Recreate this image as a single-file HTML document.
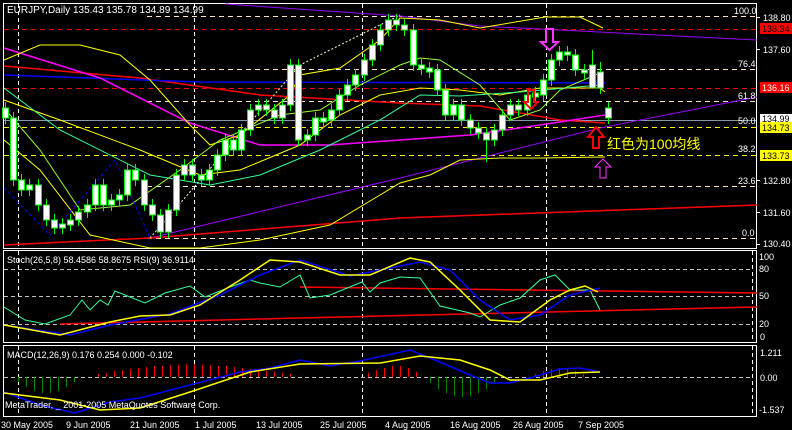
<!DOCTYPE html>
<html><head><meta charset="utf-8"><style>
html,body{margin:0;padding:0;background:#000;width:792px;height:430px;overflow:hidden}
text{font-family:"Liberation Sans","Noto Sans CJK SC",sans-serif;font-size:9px;fill:#fff}
</style></head><body>
<svg width="792" height="430" xmlns="http://www.w3.org/2000/svg">
<rect width="792" height="430" fill="#000"/>
<g fill="none" stroke="#fff" stroke-width="1">
<rect x="3.5" y="3.5" width="753" height="245"/>
<rect x="3.5" y="250.5" width="753" height="92"/>
<rect x="3.5" y="345.5" width="753" height="71"/>
</g>
<g stroke="#fff" stroke-dasharray="4,3" stroke-width="1">
<line x1="18.5" y1="4" x2="18.5" y2="248"/><line x1="194.5" y1="4" x2="194.5" y2="248"/><line x1="362.5" y1="4" x2="362.5" y2="248"/><line x1="546.5" y1="4" x2="546.5" y2="248"/>
<line x1="18.5" y1="251" x2="18.5" y2="342"/><line x1="194.5" y1="251" x2="194.5" y2="342"/><line x1="362.5" y1="251" x2="362.5" y2="342"/><line x1="546.5" y1="251" x2="546.5" y2="342"/>
<line x1="18.5" y1="346" x2="18.5" y2="416"/><line x1="194.5" y1="346" x2="194.5" y2="416"/><line x1="362.5" y1="346" x2="362.5" y2="416"/><line x1="546.5" y1="346" x2="546.5" y2="416"/>
<line x1="752.5" y1="251" x2="752.5" y2="342"/><line x1="752.5" y1="346" x2="752.5" y2="416"/>
</g>
<g stroke="#ffe4c4" stroke-dasharray="5,4">
<line x1="147" y1="16.5" x2="756" y2="16.5"/><line x1="147" y1="69.5" x2="756" y2="69.5"/><line x1="147" y1="101.5" x2="756" y2="101.5"/><line x1="147" y1="186.5" x2="756" y2="186.5"/><line x1="147" y1="238.5" x2="756" y2="238.5"/>
</g>
<g stroke="#ff0000" stroke-dasharray="5,4"><line x1="4" y1="29.5" x2="756" y2="29.5"/><line x1="4" y1="88.5" x2="756" y2="88.5"/></g>
<g stroke="#ffff00" stroke-dasharray="5,4"><line x1="4" y1="127.5" x2="756" y2="127.5"/><line x1="4" y1="155.5" x2="756" y2="155.5"/></g>
<line x1="4" y1="120.5" x2="756" y2="120.5" stroke="#8899aa"/>
<g fill="none" stroke-width="1">
<polyline stroke="#9900ff" points="225,4 400,16 480,26 757,40"/>
<polyline stroke="#9900ff" points="150,238 400,178 600,128 757,97"/>
<polyline stroke="#ff0000" stroke-width="1.5" points="4,245 150,238 400,218 757,205"/>
<polyline stroke="#ff0000" stroke-width="1.5" points="4,66 140,78 260,95 400,103 480,106 560,120 605,123"/>
<polyline stroke="#0000ff" stroke-width="1.5" points="4,75 200,82 605,83"/>
<polyline stroke="#ff00ff" stroke-width="1.5" points="4,48 100,78 190,123 260,145 330,145 400,140 470,135 540,125 605,115"/>
<polyline stroke="#ffff00" points="4,60 40,45 80,45 120,55 150,80 190,125 210,145 240,135 290,95 300,75 340,68 380,40 400,18 440,20 480,28 545,17 580,17 603,28"/>
<polyline stroke="#ffff00" points="4,140 40,170 90,235 150,248 200,248 260,240 330,225 380,195 400,183 430,175 460,160 500,158 540,158 605,157"/>
<polyline stroke="#ffff00" points="4,100 60,120 140,150 200,175 240,170 300,145 340,115 380,95 420,88 460,90 500,95 540,88 600,88 605,92"/>
<polyline stroke="#33ff99" points="4,88 60,130 150,175 210,185 260,175 320,150 380,120 420,95 460,96 520,92 600,85"/>
<polyline stroke="#99ff33" points="4,108 40,150 80,210 130,205 180,170 220,140 280,115 320,110 360,85 400,65 420,58 440,60 480,85 510,120 540,110 560,90 600,73"/>
<polyline stroke="#0000ff" stroke-dasharray="3,3" points="4,188 50,235 115,160 150,238"/>
<polyline stroke="#ffffcc" stroke-dasharray="2,2" points="150,238 300,65 400,15"/>
</g>
<path fill="none" stroke="#00ff00" d="M5.5 102V124M13.5 112V186M21.5 174V196M29.5 179V196M38.5 179V211M46.5 199V226M54.5 214V234M62.5 218V234M70.5 214V231M78.5 206V226M87.5 199V218M95.5 179V211M103.5 179V211M111.5 194V211M119.5 189V206M127.5 164V201M135.5 164V186M144.5 174V211M152.5 199V221M160.5 209V238M168.5 204V238M176.5 169V216M184.5 159V181M192.5 159V181M201.5 169V186M209.5 164V186M217.5 149V176M225.5 134V161M233.5 134V156M241.5 124V156M250.5 104V136M258.5 99V116M266.5 99V116M274.5 104V124M282.5 99V124M290.5 59V111M298.5 59V146M307.5 129V146M315.5 112V141M323.5 112V128M331.5 104V126M339.5 89V116M347.5 79V101M355.5 69V91M364.5 54V81M372.5 39V66M380.5 24V51M388.5 14V36M396.5 14V31M404.5 19V36M413.5 24V71M421.5 59V75M429.5 62V78M437.5 64V96M445.5 84V121M453.5 99V121M461.5 99V126M470.5 114V134M478.5 122V139M486.5 127V162M494.5 124V146M502.5 109V136M510.5 99V121M518.5 99V116M527.5 89V116M535.5 87V103M543.5 74V101M551.5 54V86M559.5 46V66M567.5 46V61M575.5 49V76M584.5 64V79M592.5 50V78M600.5 62V94M608.5 102V124"/>
<g fill="#fff" stroke="#00ff00">
<rect x="2.5" y="108" width="6" height="10"/><rect x="10.5" y="118" width="6" height="62"/><rect x="18.5" y="180" width="6" height="10"/><rect x="26.5" y="185" width="6" height="5"/><rect x="35.5" y="185" width="6" height="20"/><rect x="43.5" y="205" width="6" height="15"/><rect x="51.5" y="220" width="6" height="8"/><rect x="59.5" y="224" width="6" height="4"/><rect x="67.5" y="220" width="6" height="5"/><rect x="75.5" y="212" width="6" height="8"/><rect x="84.5" y="205" width="6" height="7"/><rect x="92.5" y="185" width="6" height="20"/><rect x="100.5" y="185" width="6" height="20"/><rect x="108.5" y="200" width="6" height="5"/><rect x="116.5" y="195" width="6" height="5"/><rect x="124.5" y="170" width="6" height="25"/><rect x="132.5" y="170" width="6" height="10"/><rect x="141.5" y="180" width="6" height="25"/><rect x="149.5" y="205" width="6" height="10"/><rect x="157.5" y="215" width="6" height="17"/><rect x="165.5" y="210" width="6" height="22"/><rect x="173.5" y="175" width="6" height="35"/><rect x="181.5" y="165" width="6" height="10"/><rect x="189.5" y="165" width="6" height="10"/><rect x="198.5" y="175" width="6" height="5"/><rect x="206.5" y="170" width="6" height="10"/><rect x="214.5" y="155" width="6" height="15"/><rect x="222.5" y="140" width="6" height="15"/><rect x="230.5" y="140" width="6" height="10"/><rect x="238.5" y="130" width="6" height="20"/><rect x="247.5" y="110" width="6" height="20"/><rect x="255.5" y="105" width="6" height="5"/><rect x="263.5" y="105" width="6" height="5"/><rect x="271.5" y="110" width="6" height="8"/><rect x="279.5" y="105" width="6" height="13"/><rect x="287.5" y="65" width="6" height="40"/><rect x="295.5" y="65" width="6" height="75"/><rect x="304.5" y="135" width="6" height="5"/><rect x="312.5" y="118" width="6" height="17"/><rect x="320.5" y="118" width="6" height="4"/><rect x="328.5" y="110" width="6" height="10"/><rect x="336.5" y="95" width="6" height="15"/><rect x="344.5" y="85" width="6" height="10"/><rect x="352.5" y="75" width="6" height="10"/><rect x="361.5" y="60" width="6" height="15"/><rect x="369.5" y="45" width="6" height="15"/><rect x="377.5" y="30" width="6" height="15"/><rect x="385.5" y="20" width="6" height="10"/><rect x="393.5" y="20" width="6" height="5"/><rect x="401.5" y="25" width="6" height="5"/><rect x="410.5" y="30" width="6" height="35"/><rect x="418.5" y="65" width="6" height="4"/><rect x="426.5" y="68" width="6" height="4"/><rect x="434.5" y="70" width="6" height="20"/><rect x="442.5" y="90" width="6" height="25"/><rect x="450.5" y="105" width="6" height="10"/><rect x="458.5" y="105" width="6" height="15"/><rect x="467.5" y="120" width="6" height="8"/><rect x="475.5" y="128" width="6" height="5"/><rect x="483.5" y="133" width="6" height="7"/><rect x="491.5" y="130" width="6" height="10"/><rect x="499.5" y="115" width="6" height="15"/><rect x="507.5" y="105" width="6" height="10"/><rect x="515.5" y="105" width="6" height="5"/><rect x="524.5" y="95" width="6" height="15"/><rect x="532.5" y="93" width="6" height="4"/><rect x="540.5" y="80" width="6" height="15"/><rect x="548.5" y="60" width="6" height="20"/><rect x="556.5" y="52" width="6" height="8"/><rect x="564.5" y="52" width="6" height="3"/><rect x="572.5" y="55" width="6" height="15"/><rect x="581.5" y="70" width="6" height="3"/><rect x="589.5" y="65" width="6" height="23"/><rect x="597.5" y="72" width="6" height="16"/><rect x="605.5" y="108" width="6" height="10"/>
</g>
<g stroke="#c0c0c0" stroke-dasharray="4,3"><line x1="4" y1="269.5" x2="752" y2="269.5"/><line x1="4" y1="296.5" x2="752" y2="296.5"/><line x1="4" y1="324.5" x2="752" y2="324.5"/><line x1="4" y1="377.5" x2="752" y2="377.5"/></g>
<path fill="none" stroke="#008800" d="M18.5 377v5M26.5 377v10M34.5 377v14M42.5 377v16M50.5 377v16M58.5 377v14M66.5 377v10M74.5 377v5M430.5 377v6M438.5 377v12M446.5 377v16M454.5 377v19M462.5 377v20M470.5 377v19M478.5 377v16M486.5 377v12M494.5 377v6"/>
<path fill="none" stroke="#ff0000" d="M98.5 377v-3M106.5 377v-4M114.5 377v-6M122.5 377v-7M130.5 377v-8M138.5 377v-9M146.5 377v-10M154.5 377v-11M162.5 377v-11M170.5 377v-12M178.5 377v-12M186.5 377v-13M194.5 377v-13M202.5 377v-12M210.5 377v-12M218.5 377v-11M226.5 377v-11M234.5 377v-10M242.5 377v-9M250.5 377v-8M258.5 377v-7M266.5 377v-6M274.5 377v-5M282.5 377v-4M290.5 377v-3M368.5 377v-4M376.5 377v-7M384.5 377v-9M392.5 377v-11M400.5 377v-11M408.5 377v-9M416.5 377v-5M535.5 377v-3M543.5 377v-6M551.5 377v-8M559.5 377v-9M567.5 377v-8M575.5 377v-6M583.5 377v-3"/>
<g fill="none">
<polyline stroke="#ff0000" stroke-width="1.5" points="60,324 300,318 757,307"/>
<polyline stroke="#ff0000" stroke-width="1.5" points="300,287 757,293"/>
<polyline stroke="#33ff99" points="4,307 25,320 45,324 70,315 82,300 90,310 100,300 108,305 115,291 130,297 145,303 165,293 190,286 205,297 230,287 250,280 260,283 280,287 300,275 310,298 330,295 362,282 370,292 380,283 400,277 420,278 430,292 440,306 470,313 480,317 500,305 520,298 540,280 555,275 570,290 590,290 600,310"/>
<polyline stroke="#0000ff" stroke-width="1.5" points="4,325 70,335 110,325 170,314 220,295 260,275 300,260 350,276 380,270 420,262 450,270 480,300 510,320 540,315 570,295 600,288"/>
<polyline stroke="#ffff00" stroke-width="1.5" points="4,325 60,335 110,322 140,316 170,315 200,305 240,280 270,260 300,262 340,275 370,275 410,258 430,262 460,290 490,320 520,322 550,300 570,290 585,286 598,292"/>
<polyline stroke="#0000ff" stroke-width="1.5" points="4,392 40,405 75,413 110,402 140,398 190,385 240,372 270,368 300,360 330,366 360,361 410,350 440,362 470,375 490,383 510,383 530,378 560,369 580,368 600,372"/>
<polyline stroke="#ffff00" stroke-width="1.5" points="4,393 60,400 100,410 140,408 190,392 250,372 300,364 380,363 420,356 460,360 490,370 510,380 540,380 570,373 600,372"/>
</g>
<path d="M546 29h7v13h5l-8.5 8-8.5-8h5z" fill="none" stroke="#ff33ff" stroke-width="2"/>
<path d="M528 90h6v12h4l-7 7-7-7h4z" fill="none" stroke="#ff0000" stroke-width="2"/>
<path d="M593 148v-11h-5l8-10 8 10h-5v11z" fill="none" stroke="#ff0000" stroke-width="2"/>
<path d="M600 178v-11h-5l8-8 8 8h-5v11z" fill="none" stroke="#ff33ff" stroke-width="1"/>
<text x="607" y="149" style="font-size:14px;fill:#ffff00">红色为100均线</text>
<text x="7" y="13" style="font-size:10px">EURJPY,Daily  135.43 135.78 134.89 134.99</text>
<text x="7" y="263">Stoch(26,5,8) 58.4586 58.8675 RSI(9) 36.9114</text>
<text x="7" y="358">MACD(12,26,9) 0.176 0.254 0.000 -0.102</text>
<text x="5" y="408">MetaTrader, _ 2001-2005 MetaQuotes Software Corp.</text>
<g><text x="734" y="14">100.0</text><text x="738" y="67">76.4</text><text x="738" y="99">61.8</text><text x="738" y="124">50.0</text><text x="738" y="152">38.2</text><text x="738" y="184">23.6</text><text x="742" y="236">0.0</text></g>
<g stroke="#fff"><line x1="757" y1="17.5" x2="760" y2="17.5"/><line x1="757" y1="49.5" x2="760" y2="49.5"/><line x1="757" y1="180.5" x2="760" y2="180.5"/><line x1="757" y1="212.5" x2="760" y2="212.5"/><line x1="757" y1="244.5" x2="760" y2="244.5"/></g>
<text x="763" y="21">138.80</text><text x="763" y="53">137.60</text><text x="763" y="184">132.80</text><text x="763" y="216">131.60</text><text x="763" y="247">130.40</text>
<rect x="760" y="23" width="32" height="11" fill="#ff0000"/><text x="762" y="32" style="fill:#000">138.34</text>
<rect x="760" y="82" width="32" height="11" fill="#ff0000"/><text x="762" y="91">136.16</text>
<rect x="760" y="114" width="32" height="10" fill="#fff"/><text x="762" y="122" style="fill:#000">134.99</text>
<rect x="760" y="122" width="32" height="11" fill="#ffff00"/><text x="762" y="131" style="fill:#000">134.73</text>
<rect x="760" y="150" width="32" height="11" fill="#ffff00"/><text x="762" y="159" style="fill:#000">133.73</text>
<text x="759" y="260">100</text><text x="759" y="272">80</text><text x="759" y="299">50</text><text x="759" y="327">20</text><text x="760" y="340">0</text>
<text x="760" y="356">1.211</text><text x="760" y="381">0.00</text><text x="759" y="413">-1.537</text>
<g><text x="1" y="428">30 May 2005</text><text x="66" y="428">9 Jun 2005</text><text x="130" y="428">21 Jun 2005</text><text x="195" y="428">1 Jul 2005</text><text x="256" y="428">13 Jul 2005</text><text x="320" y="428">25 Jul 2005</text><text x="385" y="428">4 Aug 2005</text><text x="450" y="428">16 Aug 2005</text><text x="513" y="428">26 Aug 2005</text><text x="578" y="428">7 Sep 2005</text></g>
</svg>
</body></html>
